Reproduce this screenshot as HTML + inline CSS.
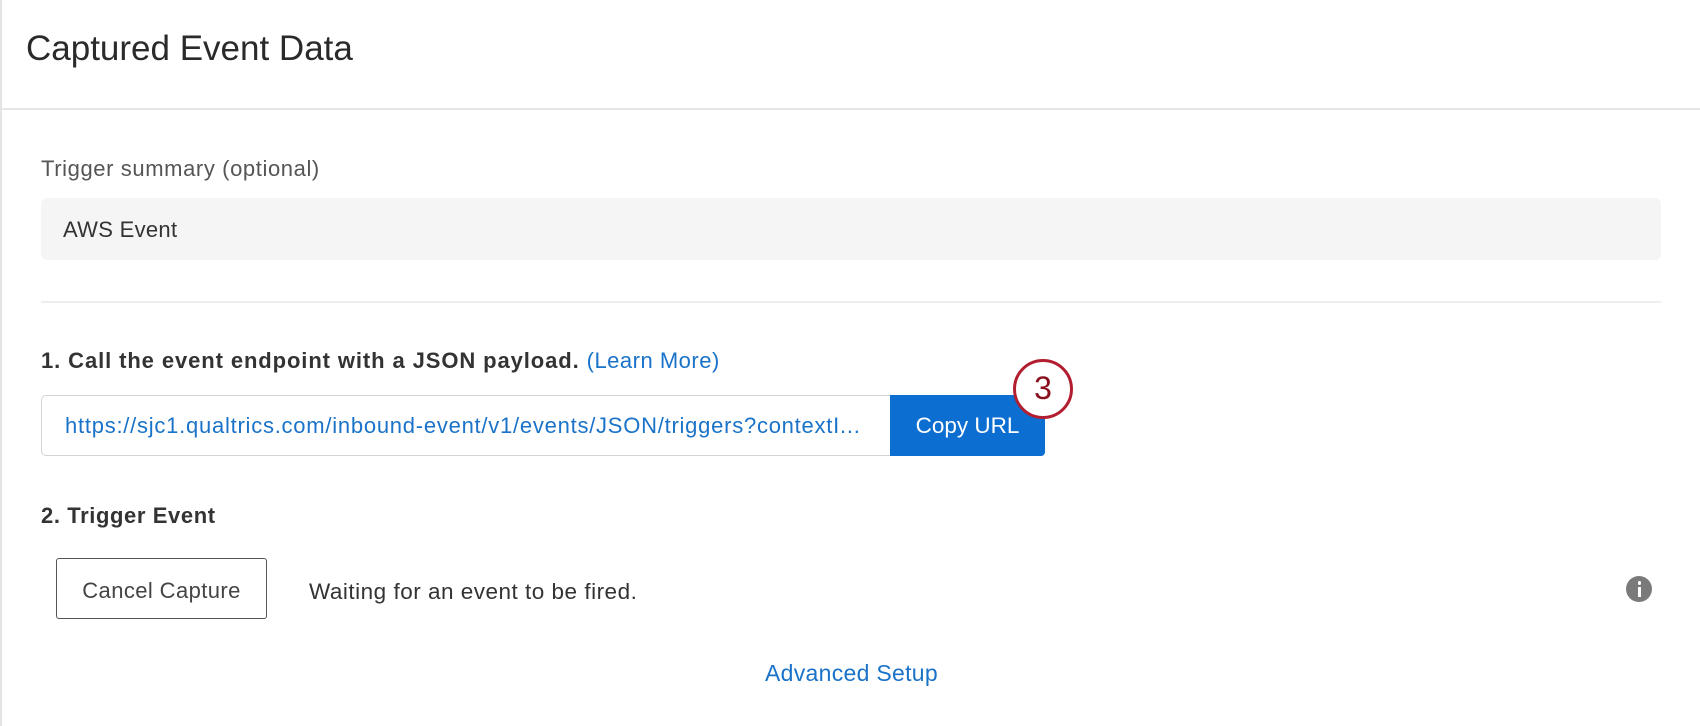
<!DOCTYPE html>
<html><head><meta charset="utf-8"><style>
*{margin:0;padding:0;box-sizing:border-box}
body{width:1700px;height:726px;background:#fff;font-family:"Liberation Sans",sans-serif;position:relative;overflow:hidden;color:#333}
.a{position:absolute;white-space:nowrap}
</style></head><body>
<div class="a" style="left:0;top:0;width:2px;height:726px;background:#e4e4e4"></div>
<div class="a" style="left:26px;top:29px;font-size:35px;color:#2a2a2a;line-height:40px">Captured Event Data</div>
<div class="a" style="left:0;top:108px;width:1700px;height:2px;background:#e6e6e6"></div>
<div class="a" style="left:41px;top:156px;font-size:22px;color:#555;line-height:26px;letter-spacing:0.6px">Trigger summary (optional)</div>
<div class="a" style="left:41px;top:198px;width:1620px;height:62px;background:#f5f5f5;border-radius:6px"></div>
<div class="a" style="left:63px;top:217px;font-size:22px;color:#333;line-height:26px;letter-spacing:0.3px">AWS Event</div>
<div class="a" style="left:41px;top:301px;width:1620px;height:2px;background:#eeeeee"></div>
<div class="a" style="left:41px;top:348px;font-size:22px;font-weight:bold;color:#333;line-height:26px;letter-spacing:0.9px">1. Call the event endpoint with a JSON payload. <span style="font-weight:normal;color:#1a73c8;letter-spacing:0.5px">(Learn More)</span></div>
<div class="a" style="left:41px;top:395px;width:852px;height:61px;border:1px solid #d4d4d4;border-radius:5px 0 0 5px;background:#fff"></div>
<div class="a" style="left:65px;top:413px;font-size:22px;color:#1a73c8;line-height:26px;letter-spacing:0.75px">https://sjc1.qualtrics.com/inbound-event/v1/events/JSON/triggers?contextI...</div>
<div class="a" style="left:890px;top:395px;width:155px;height:61px;background:#0b6ed0;border-radius:0 4px 4px 0;color:#fff;font-size:22.5px;line-height:61px;text-align:center">Copy URL</div>
<div class="a" style="left:1013px;top:359px;width:60px;height:60px;border:3.5px solid #b21e30;border-radius:50%;background:#fff;color:#8a1020;font-size:32px;line-height:52px;text-align:center">3</div>
<div class="a" style="left:41px;top:503px;font-size:22px;font-weight:bold;color:#333;line-height:26px;letter-spacing:0.6px">2. Trigger Event</div>
<div class="a" style="left:56px;top:558px;width:211px;height:61px;border:1.5px solid #555;border-radius:3px;font-size:22px;color:#444;line-height:64px;text-align:center;letter-spacing:0.4px">Cancel Capture</div>
<div class="a" style="left:309px;top:579px;font-size:22.5px;color:#333;line-height:26px;letter-spacing:0.5px">Waiting for an event to be fired.</div>
<div class="a" style="left:1626px;top:576px;width:26px;height:26px;border-radius:50%;background:#7a7a7a"></div>
<div class="a" style="left:1637.5px;top:581px;width:3.5px;height:3.5px;border-radius:50%;background:#fff"></div>
<div class="a" style="left:1637.5px;top:587px;width:3.5px;height:10px;background:#fff"></div>
<div class="a" style="left:765px;top:660px;font-size:23px;color:#1a73c8;line-height:26px;letter-spacing:0.3px">Advanced Setup</div>
</body></html>
